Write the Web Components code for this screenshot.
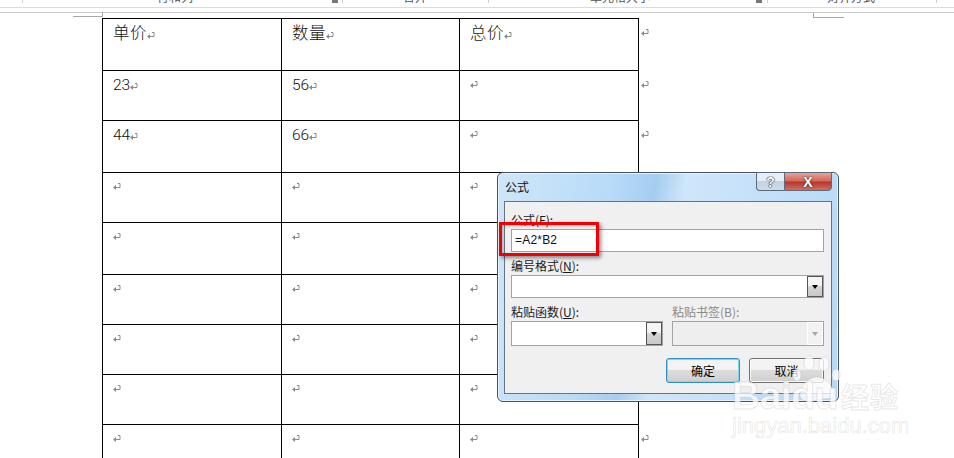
<!DOCTYPE html>
<html lang="zh">
<head>
<meta charset="utf-8">
<title>公式</title>
<style>
    html, body { margin: 0; height: 458px; overflow: hidden; background: #fff; }
    body { position: relative; font-family: "Noto Sans CJK SC", sans-serif; }
</style>
</head>
<body>
<doc-ruler></doc-ruler>
<doc-table>
    <doc-row tail><doc-cell head>单价</doc-cell><doc-cell head>数量</doc-cell><doc-cell head>总价</doc-cell></doc-row>
    <doc-row tail style="--h:50px"><doc-cell>23</doc-cell><doc-cell>56</doc-cell><doc-cell></doc-cell></doc-row>
    <doc-row tail><doc-cell>44</doc-cell><doc-cell>66</doc-cell><doc-cell></doc-cell></doc-row>
    <doc-row style="--h:50px"><doc-cell></doc-cell><doc-cell></doc-cell><doc-cell></doc-cell></doc-row>
    <doc-row><doc-cell></doc-cell><doc-cell></doc-cell><doc-cell></doc-cell></doc-row>
    <doc-row style="--h:50px"><doc-cell></doc-cell><doc-cell></doc-cell><doc-cell></doc-cell></doc-row>
    <doc-row style="--h:50px"><doc-cell></doc-cell><doc-cell></doc-cell><doc-cell></doc-cell></doc-row>
    <doc-row style="--h:50px"><doc-cell></doc-cell><doc-cell></doc-cell><doc-cell></doc-cell></doc-row>
    <doc-row tail><doc-cell></doc-cell><doc-cell></doc-cell><doc-cell></doc-cell></doc-row>
</doc-table>
<formula-dialog></formula-dialog>
<baidu-mark></baidu-mark>

<script>
class ParaMark extends HTMLElement {
    constructor() {
        super();
        this.attachShadow({ mode: 'open' });
    }

    connectedCallback() {
        this.shadowRoot.innerHTML = `
            <style>
                :host { display: block; width: 8px; height: 8px; flex: none; }
                svg { display: block; }
            </style>
            <svg width="8" height="8" viewBox="0 0 8 8">
                <path d="M5 .5H7V4.5H2" fill="none" stroke="#8a8a8a" stroke-width="1"/>
                <path d="M0 4.5L3 2V7Z" fill="#8a8a8a"/>
            </svg>
        `;
    }
}

class DocRuler extends HTMLElement {
    constructor() {
        super();
        this.attachShadow({ mode: 'open' });
    }

    connectedCallback() {
        this.shadowRoot.innerHTML = `
            <style>
                :host { display: block; height: 18px; position: relative; overflow: hidden; }
                .band {
                    height: 7px;
                    border-bottom: 1px solid #dcdcdc;
                    position: relative;
                    overflow: hidden;
                }
                .gap { height: 4px; border-bottom: 1px solid #c8c8c8; }
                span {
                    position: absolute;
                    top: -9px;
                    font: 12px/12px "Noto Sans CJK SC", sans-serif;
                    color: #555;
                    white-space: nowrap;
                }
                i { position: absolute; top: 0; width: 1px; height: 3px; background: #d0d0d0; }
                b { position: absolute; top: 0; width: 6px; height: 3px; background: #777; }
                .corner { position: absolute; border-style: solid; border-color: #a8a8a8; border-width: 0; }
                .cl { left: 73px; top: 12px; width: 29px; height: 4px; border-bottom-width: 1px; border-right-width: 1px; }
                .cr { left: 813px; top: 13px; width: 30px; height: 4px; border-bottom-width: 1px; border-left-width: 1px; }
            </style>
            <div class="band">
                <i style="left:22px"></i>
                <span style="left:157px">行和列</span>
                <b style="left:332px"></b>
                <i style="left:342px"></i>
                <span style="left:403px">合并</span>
                <i style="left:488px"></i>
                <span style="left:590px">单元格大小</span>
                <b style="left:756px"></b>
                <i style="left:767px"></i>
                <span style="left:827px">对齐方式</span>
                <i style="left:936px"></i>
            </div>
            <div class="gap"></div>
            <div class="corner cl"></div>
            <div class="corner cr"></div>
        `;
    }
}

class DocTable extends HTMLElement {
    constructor() {
        super();
        this.attachShadow({ mode: 'open' });
    }

    connectedCallback() {
        this.shadowRoot.innerHTML = `
            <style>
                :host { display: block; margin-left: 102px; }
                .frame { position: relative; }
                .frame::before {
                    content: '';
                    display: block;
                    width: 537px;
                    height: 1px;
                    background: #000;
                }
            </style>
            <div class="frame"><slot></slot></div>
        `;
    }
}

class DocRow extends HTMLElement {
    constructor() {
        super();
        this.attachShadow({ mode: 'open' });
    }

    connectedCallback() {
        const tail = this.hasAttribute('tail') ? '<para-mark class="tail"></para-mark>' : '';
        this.shadowRoot.innerHTML = `
            <style>
                :host {
                    display: grid;
                    grid-template-columns: 180px 178px 179px 12px;
                    height: var(--h, 52px);
                    box-sizing: border-box;
                }
                .tail { margin: 10px 0 0 2px; }
            </style>
            <slot></slot>${tail}
        `;
    }
}

class DocCell extends HTMLElement {
    constructor() {
        super();
        this.attachShadow({ mode: 'open' });
    }

    connectedCallback() {
        const head = this.hasAttribute('head');
        const empty = !this.textContent.trim();
        this.shadowRoot.innerHTML = `
            <style>
                :host {
                    display: flex;
                    align-items: flex-start;
                    box-sizing: border-box;
                    border-right: 1px solid #000;
                    border-bottom: 1px solid #000;
                    padding: ${head ? 3 : 6}px 0 0 10px;
                    color: #111;
                    font: ${head ? '300 16.5px/20px "Noto Sans CJK SC", sans-serif' : '300 15.5px/17px Roboto, sans-serif'};
                    letter-spacing: ${head ? '0.5px' : '0'};
                }
                :host(:first-child) { border-left: 1px solid #000; }
                para-mark { margin-top: ${empty ? 4 : head ? 10 : 6}px; }
            </style>
            <slot></slot><para-mark></para-mark>
        `;
    }
}

class ComboBox extends HTMLElement {
    constructor() {
        super();
        this.attachShadow({ mode: 'open' });
    }

    connectedCallback() {
        const off = this.hasAttribute('disabled');
        this.shadowRoot.innerHTML = `
            <style>
                :host {
                    display: flex;
                    justify-content: flex-end;
                    box-sizing: border-box;
                    height: var(--combo-h, 25px);
                    border: 1px solid #a3a3a3;
                    background: ${off ? '#eeeeee' : '#fff'};
                }
                .btn {
                    width: 16px;
                    display: flex;
                    align-items: center;
                    justify-content: center;
                    box-sizing: border-box;
                    border: 1px solid ${off ? '#fff' : '#555'};
                    background: ${off ? '#f2f2f2' : 'linear-gradient(#f4f4f4 45%, #d4d4d4 50%, #c8c8c8)'};
                }
                .btn::after {
                    content: '';
                    border: 3.5px solid transparent;
                    border-top: 4px solid ${off ? '#a6a6a6' : '#000'};
                    border-bottom: 0;
                }
            </style>
            <div class="btn"></div>
        `;
    }
}

class DialogButton extends HTMLElement {
    constructor() {
        super();
        this.attachShadow({ mode: 'open' });
    }

    connectedCallback() {
        const main = this.hasAttribute('main');
        this.shadowRoot.innerHTML = `
            <style>
                :host {
                    display: flex;
                    align-items: center;
                    justify-content: center;
                    box-sizing: border-box;
                    width: ${main ? 74 : 75}px;
                    height: 25px;
                    border-radius: 3px;
                    border: 1px solid ${main ? '#2f8fcf' : '#707070'};
                    box-shadow: inset 0 0 0 1px ${main ? '#7fd4f5' : '#fbfbfb'};
                    background: linear-gradient(#f3f3f3 45%, #dcdcdc 50%, #cfcfcf);
                    font: 12px "Noto Sans CJK SC", sans-serif;
                    color: #000;
                }
            </style>
            <slot></slot>
        `;
    }
}

class FormulaDialog extends HTMLElement {
    constructor() {
        super();
        this.attachShadow({ mode: 'open' });
    }

    connectedCallback() {
        this.shadowRoot.innerHTML = `
            <style>
                :host {
                    position: absolute;
                    left: 497px;
                    top: 172px;
                    width: 342px;
                    height: 230px;
                    box-sizing: border-box;
                    border: 1px solid #46525e;
                    border-radius: 6px;
                    background: linear-gradient(100deg, #cfe6f9, #b8dbf8 30%, #a6cdf0 42%, #cfe6fa 50%, #b4d8f8);
                    box-shadow: inset 0 0 0 1px #e6f3fd;
                    font: 12px/14px "Noto Sans CJK SC", sans-serif;
                    color: #1a1a1a;
                    display: flex;
                    flex-direction: column;
                    padding: 0 6px 7px;
                }
                header { height: 28px; display: flex; flex: none; justify-content: space-between; }
                .title { padding: 7px 0 0 1px; line-height: 14px; color: #111; }
                .ctrls { display: flex; height: 19px; margin-top: -1px; }
                .ctrl {
                    display: flex; align-items: center; justify-content: center;
                    box-sizing: border-box; height: 19px;
                    border: 1px solid #5a6a7a;
                    font: bold 14px "Liberation Sans", sans-serif;
                    color: #fff;
                }
                .help {
                    width: 28px; border-right: 0; border-radius: 0 0 0 4px;
                    background: linear-gradient(#e3eef8 45%, #c3d2e0 50%, #cbdbe9);
                    text-shadow: 0 0 1px #223, 0 0 1px #223, 0 0 1px #223;
                }
                .close {
                    width: 48px; border-radius: 0 0 4px 0;
                    background: linear-gradient(#e8a39a, #cf6a5e 45%, #b8372b 55%, #cf6f62);
                    text-shadow: 0 0 1px #333, 0 0 2px #333;
                }
                main {
                    flex: 1;
                    background: #f0f0f0;
                    border: 1px solid #66747f;
                    padding: 9px 7px 0 6px;
                    display: flex;
                    flex-direction: column;
                }
                label { display: block; height: 18px; line-height: 17px; white-space: nowrap; }
                label u { text-underline-offset: 1px; }
                .field {
                    box-sizing: border-box;
                    height: 23px;
                    border: 1px solid #a3a3a3;
                    background: #fff;
                    padding-left: 3px;
                    font: 12px/21px "Liberation Sans", sans-serif;
                    letter-spacing: .2px;
                    color: #111;
                    margin-bottom: 5px;
                }
                combo-box.num { --combo-h: 23px; margin-bottom: 5px; }
                .pair { display: grid; grid-template-columns: 152px 152px; column-gap: 9px; }
                .pair label { height: 18px; }
                .dim { color: #8a8a8a; }
                .buttons { display: flex; justify-content: flex-end; gap: 9px; margin-top: 12px; }
                .redbox {
                    position: absolute;
                    left: 1px; top: 49px;
                    width: 100px; height: 34px;
                    box-sizing: border-box;
                    border: 3px solid #f00000;
                    box-shadow: 2px 2px 4px rgba(0,0,0,.45), inset 1px 1px 3px rgba(0,0,0,.25);
                }
            </style>
            <header>
                <div class="title">公式</div>
                <div class="ctrls">
                    <div class="ctrl help">?</div>
                    <div class="ctrl close">X</div>
                </div>
            </header>
            <main>
                <label>公式(F):</label>
                <div class="field">=A2*B2</div>
                <label>编号格式(<u>N</u>):</label>
                <combo-box class="num"></combo-box>
                <div class="pair">
                    <label>粘贴函数(<u>U</u>):</label>
                    <label class="dim">粘贴书签(B):</label>
                    <combo-box></combo-box>
                    <combo-box disabled></combo-box>
                </div>
                <div class="buttons">
                    <dialog-button main>确定</dialog-button>
                    <dialog-button>取消</dialog-button>
                </div>
            </main>
            <div class="redbox"></div>
        `;
    }
}

class BaiduMark extends HTMLElement {
    constructor() {
        super();
        this.attachShadow({ mode: 'open' });
    }

    connectedCallback() {
        this.shadowRoot.innerHTML = `
            <style>
                :host {
                    position: absolute;
                    left: 732px;
                    top: 355px;
                    width: 175px;
                    height: 85px;
                    pointer-events: none;
                }
                div {
                    position: absolute;
                    white-space: nowrap;
                    color: rgba(255,255,255,.75);
                    -webkit-text-stroke: 1px rgba(170,170,170,.28);
                }
                .bd { left: 0; top: 19px; font: bold 39px/44px "Liberation Sans", sans-serif; letter-spacing: -.5px; }
                .jy { left: 109px; top: 22px; font: bold 28px/38px "Noto Sans CJK SC", sans-serif; letter-spacing: 1px; }
                .url { left: 0; top: 58px; font: 22px/26px "Liberation Sans", sans-serif; -webkit-text-stroke: .7px rgba(170,170,170,.3); }
                svg { position: absolute; left: 60px; top: 0; }
            </style>
            <svg width="50" height="50" viewBox="0 0 50 50">
                <g fill="rgba(255,255,255,.75)" stroke="rgba(170,170,170,.28)">
                    <ellipse cx="5" cy="20" rx="4" ry="6"/>
                    <ellipse cx="17" cy="8" rx="5" ry="7"/>
                    <ellipse cx="32" cy="9" rx="5" ry="7"/>
                    <ellipse cx="44" cy="20" rx="4" ry="6"/>
                    <path d="M25 22C14 22 8 34 8 40S16 48 25 45 42 46 42 40 36 22 25 22Z"/>
                </g>
            </svg>
            <div class="bd">Baidu</div>
            <div class="jy">经验</div>
            <div class="url">jingyan.baidu.com</div>
        `;
    }
}

customElements.define('para-mark', ParaMark);
customElements.define('doc-ruler', DocRuler);
customElements.define('doc-table', DocTable);
customElements.define('doc-row', DocRow);
customElements.define('doc-cell', DocCell);
customElements.define('combo-box', ComboBox);
customElements.define('dialog-button', DialogButton);
customElements.define('formula-dialog', FormulaDialog);
customElements.define('baidu-mark', BaiduMark);
</script>
</body>
</html>
